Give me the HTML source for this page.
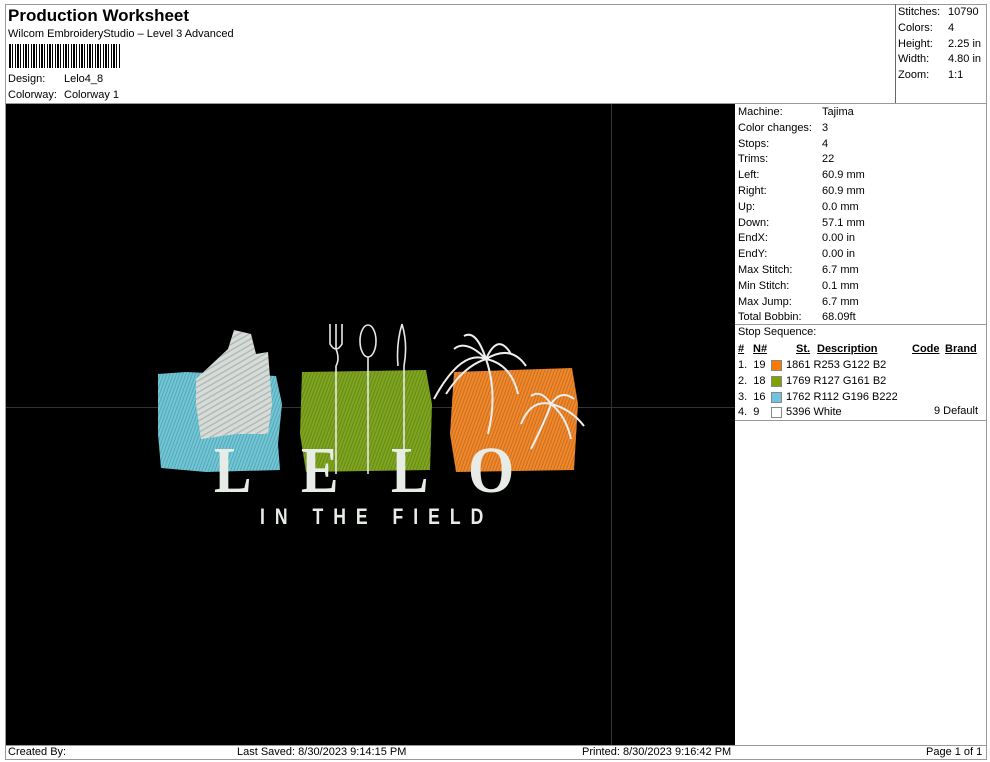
<!DOCTYPE html>
<html><head><meta charset="utf-8"><style>
*{margin:0;padding:0;box-sizing:border-box}
body{width:990px;height:762px;background:#fff;font-family:"Liberation Sans",Arial,sans-serif;color:#000;position:relative;overflow:hidden}
.a{position:absolute;white-space:nowrap}
.t{font-size:11px}
.line{position:absolute;background:#999}
</style></head><body>
<div class="line" style="left:5px;top:4px;width:982px;height:1px"></div>
<div class="line" style="left:5px;top:4px;width:1px;height:756px"></div>
<div class="line" style="left:986px;top:4px;width:1px;height:756px"></div>
<div class="line" style="left:5px;top:759px;width:982px;height:1px"></div>
<div class="line" style="left:895px;top:4px;width:1px;height:99px;background:#666"></div>
<div class="line" style="left:5px;top:103px;width:982px;height:1px"></div>
<div class="line" style="left:5px;top:745px;width:982px;height:1px"></div>

<div class="a" style="left:8px;top:6px;font-size:17px;font-weight:bold">Production Worksheet</div>
<div class="a t" style="left:8px;top:28px">Wilcom EmbroideryStudio – Level 3 Advanced</div>
<div class="a" style="left:9px;top:44px;width:112px;height:24px;background:repeating-linear-gradient(90deg,#000 0 2px,#fff 2px 3px,#000 3px 4px,#fff 4px 6px,#000 6px 7px,#fff 7px 8px)"></div>
<div class="a t" style="left:8px;top:73px">Design:</div><div class="a t" style="left:64px;top:73px">Lelo4_8</div>
<div class="a t" style="left:8px;top:89px">Colorway:</div><div class="a t" style="left:64px;top:89px">Colorway 1</div>

<div class="a t" style="left:898px;top:5px;line-height:15.8px">Stitches:<br>Colors:<br>Height:<br>Width:<br>Zoom:</div>
<div class="a t" style="left:948px;top:5px;line-height:15.8px">10790<br>4<br>2.25 in<br>4.80 in<br>1:1</div>

<div class="a" style="left:6px;top:104px;width:729px;height:641px;background:#000">
<div style="position:absolute;left:605px;top:0;width:1px;height:641px;background:#333"></div>
<div style="position:absolute;left:0;top:303px;width:729px;height:1px;background:#333"></div>
<svg width="729" height="641" style="position:absolute;left:0;top:0">
<defs>
<pattern id="s" width="3" height="3" patternUnits="userSpaceOnUse" patternTransform="rotate(20)"><rect width="1" height="3" fill="#000" fill-opacity=".18"/></pattern>
<pattern id="w" width="5" height="5" patternUnits="userSpaceOnUse" patternTransform="rotate(-30)"><rect width="5" height="1.5" fill="#8a9a98" fill-opacity=".5"/></pattern>
</defs>
<path d="M152 270 L180 268 L270 272 L276 300 L272 340 L274 366 L200 368 L155 364 L152 330 Z" fill="#6fc8d8"/>
<path d="M152 270 L180 268 L270 272 L276 300 L272 340 L274 366 L200 368 L155 364 L152 330 Z" fill="url(#s)"/>
<path d="M190 275 L222 245 L228 226 L245 230 L250 250 L262 248 L266 300 L262 330 L230 330 L195 335 L190 300 Z" fill="#d8dcd8"/>
<path d="M190 275 L222 245 L228 226 L245 230 L250 250 L262 248 L266 300 L262 330 L230 330 L195 335 L190 300 Z" fill="url(#w)"/>
<path d="M296 268 L420 266 L426 300 L424 366 L300 368 L294 330 Z" fill="#7fa61f"/>
<path d="M296 268 L420 266 L426 300 L424 366 L300 368 L294 330 Z" fill="url(#s)"/>
<path d="M448 268 L566 264 L572 300 L568 366 L450 368 L444 330 Z" fill="#f2882a"/>
<path d="M448 268 L566 264 L572 300 L568 366 L450 368 L444 330 Z" fill="url(#s)"/>
<g stroke="#e8e8e8" stroke-width="1.6" fill="none">
<path d="M330 220 V245 Q334 255 330 262 V370 M324 220 V240 Q330 250 336 240 V220"/>
<ellipse cx="362" cy="237" rx="8" ry="16"/><path d="M362 253 V370"/>
<path d="M396 220 Q402 240 398 262 V370 M396 220 Q390 240 392 262"/>
</g>
<g stroke="#eee" stroke-width="2" fill="none">
<path d="M482 330 Q492 290 480 255"/>
<path d="M480 255 Q455 245 428 295 M480 255 Q460 235 448 245 M480 255 Q470 225 458 232 M480 255 Q492 228 505 250 M480 255 Q505 240 520 262 M480 255 Q505 260 512 290 M480 255 Q458 262 440 290"/>
<path d="M525 345 Q540 315 545 300"/>
<path d="M545 300 Q525 295 515 320 M545 300 Q535 285 525 292 M545 300 Q555 285 568 295 M545 300 Q565 305 578 322 M545 300 Q560 312 565 335"/>
</g>
<g font-family="Liberation Serif,serif" font-size="66" fill="#e8ece6" font-weight="bold">
<text x="208" y="388" transform="translate(208 0) scale(.85 1) translate(-208 0)">L</text>
<text x="295" y="388" transform="translate(295 0) scale(.85 1) translate(-295 0)">E</text>
<text x="385" y="388" transform="translate(385 0) scale(.85 1) translate(-385 0)">L</text>
<text x="462" y="388" transform="translate(462 0) scale(.9 1) translate(-462 0)">O</text>
</g>
<text x="254" y="420" transform="translate(254 0) scale(.8 1) translate(-254 0)" font-family="Liberation Sans,sans-serif" font-size="22" font-weight="bold" fill="#e8ece6" letter-spacing="12.5">IN THE FIELD</text>
</svg>
</div>

<div class="a t" style="left:738px;top:105px;line-height:15.8px">Machine:<br>Color changes:<br>Stops:<br>Trims:<br>Left:<br>Right:<br>Up:<br>Down:<br>EndX:<br>EndY:<br>Max Stitch:<br>Min Stitch:<br>Max Jump:<br>Total Bobbin:</div>
<div class="a t" style="left:822px;top:105px;line-height:15.8px">Tajima<br>3<br>4<br>22<br>60.9 mm<br>60.9 mm<br>0.0 mm<br>57.1 mm<br>0.00 in<br>0.00 in<br>6.7 mm<br>0.1 mm<br>6.7 mm<br>68.09ft</div>
<div class="line" style="left:735px;top:324px;width:252px;height:1px"></div>
<div class="a t" style="left:738px;top:326px">Stop Sequence:</div>
<div class="a t" style="left:738px;top:343px;font-weight:bold;text-decoration:underline">#</div>
<div class="a t" style="left:753px;top:343px;font-weight:bold;text-decoration:underline">N#</div>
<div class="a t" style="left:796px;top:343px;font-weight:bold;text-decoration:underline">St.</div>
<div class="a t" style="left:817px;top:343px;font-weight:bold;text-decoration:underline">Description</div>
<div class="a t" style="left:912px;top:343px;font-weight:bold;text-decoration:underline">Code</div>
<div class="a t" style="left:945px;top:343px;font-weight:bold;text-decoration:underline">Brand</div>
<div class="a t" style="left:738px;top:358px;line-height:15.8px">1.&nbsp; 19<br>2.&nbsp; 18<br>3.&nbsp; 16<br>4.&nbsp; 9</div>
<div class="a" style="left:771px;top:360px;width:11px;height:11px;background:#fd7a02;border:1px solid #888"></div>
<div class="a" style="left:771px;top:376px;width:11px;height:11px;background:#7fa102;border:1px solid #888"></div>
<div class="a" style="left:771px;top:392px;width:11px;height:11px;background:#70c4de;border:1px solid #888"></div>
<div class="a" style="left:771px;top:407px;width:11px;height:11px;background:#fff;border:1px solid #888"></div>
<div class="a t" style="left:786px;top:358px;line-height:15.8px">1861 R253 G122 B2<br>1769 R127 G161 B2<br>1762 R112 G196 B222<br>5396 White</div>
<div class="a t" style="left:934px;top:405px">9 Default</div>
<div class="line" style="left:735px;top:420px;width:252px;height:1px"></div>

<div class="a t" style="left:8px;top:746px">Created By:</div>
<div class="a t" style="left:237px;top:746px">Last Saved: 8/30/2023 9:14:15 PM</div>
<div class="a t" style="left:582px;top:746px">Printed: 8/30/2023 9:16:42 PM</div>
<div class="a t" style="left:926px;top:746px">Page 1 of 1</div>
</body></html>
